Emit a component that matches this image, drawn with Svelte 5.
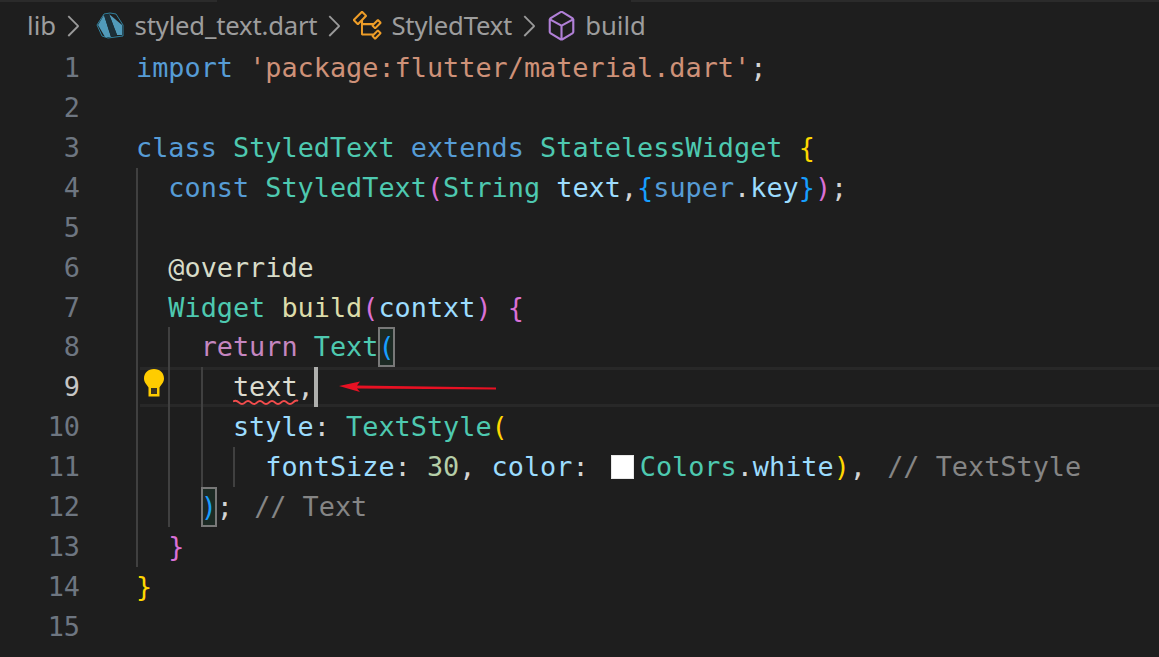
<script>
  const T = '#4ec9b0', K = '#569cd6', V = '#9cdcfe', D = '#d4d4d4', S = '#ce9178', C = '#c586c0', F = '#dcdcaa', N = '#b5cea8', Y = '#ffd700', P = '#da70d6', B = '#179fff', M = '#858585';

  const lines = [
    { n: 1, g: 0, t: [['import', K], [' ', D], ["'package:flutter/material.dart'", S], [';', D]] },
    { n: 2, g: 0, t: [] },
    { n: 3, g: 0, t: [['class', K], [' ', D], ['StyledText', T], [' ', D], ['extends', K], [' ', D], ['StatelessWidget', T], [' ', D], ['{', Y]] },
    { n: 4, g: 1, t: [['const', K], [' ', D], ['StyledText', T], ['(', P], ['String', T], [' ', D], ['text', V], [',', D], ['{', B], ['super', K], ['.', D], ['key', V], ['}', B], [')', P], [';', D]] },
    { n: 5, g: 1, t: [] },
    { n: 6, g: 1, t: [['@override', '#d7dcc8']] },
    { n: 7, g: 1, t: [['Widget', T], [' ', D], ['build', F], ['(', P], ['contxt', V], [')', P], [' ', D], ['{', P]] },
    { n: 8, g: 2, t: [['return', C], [' ', D], ['Text', T], ['(', B, 'box']] },
    { n: 9, g: 3, active: true, t: [['text', '#dcdcd0'], [',', D]] },
    { n: 10, g: 3, t: [['style', V], [':', D], [' ', D], ['TextStyle', T], ['(', Y]] },
    { n: 11, g: 4, t: [['fontSize', V], [':', D], [' ', D], ['30', N], [',', D], [' ', D], ['color', V], [':', D], [' ', D], ['', D, 'swatch'], ['Colors', T], ['.', D], ['white', V], [')', Y], [',', D], [' ', D], ['// TextStyle', M, 'inlay']] },
    { n: 12, g: 2, t: [[')', B, 'box'], [';', D], [' ', D], ['// Text', M, 'inlay']] },
    { n: 13, g: 1, t: [['}', P]] },
    { n: 14, g: 0, t: [['}', Y]] },
    { n: 15, g: 0, t: [] }
  ];
</script>

<main class="editor">
  <div class="topline">
    <span class="seg lit left"></span>
    <span class="seg gap"></span>
    <span class="seg lit"></span>
  </div>

  <nav class="crumbs">
    <span class="lib">lib</span>
    {#snippet chev()}
      <svg class="chev" viewBox="4 0 8 16" aria-hidden="true"><path fill="#9a9a9a" d="M10.072 8.024L5.715 3.667l.618-.62L11 7.716v.618L6.333 13l-.618-.619 4.357-4.357z"/></svg>
    {/snippet}
    {@render chev()}
    <svg class="dart" viewBox="0 0 28 28" aria-hidden="true">
      <path d="M8 2 14 1 20 2 27 13V24L12 26 6 24 1 13Z" fill="#1e1e1e" stroke="#2f7f9c" stroke-width="1"/>
      <path d="M2 13 8 3 15 25H9Z" fill="#519aba"/>
      <path d="M13 2 26 13V23L21 23Z" fill="#519aba"/>
      <path d="M8 3 13 2 21 23 15 25Z" fill="#1c2f38"/>
    </svg>
    <span class="file">styled_text.dart</span>
    {@render chev()}
    <svg class="cls" viewBox="1 1 14 14" aria-hidden="true"><path fill="#ee9d28" d="M11.34 9.71h.71l2.67-2.67v-.71L13.38 5h-.7l-1.82 1.81h-5V5.56l1.86-1.85V3l-2-2H5L1 5v.71l2 2h.71l1.14-1.15v5.79l.5.5H10v.52l1.33 1.34h.71l2.67-2.67v-.71L13.37 10h-.7l-1.86 1.85h-5v-4H10v.48l1.34 1.38zm1.69-3.65l.63.63-2 2-.63-.63 2-2zm0 5l.63.63-2 2-.63-.63 2-2zM3.35 6.65l-1.29-1.3 3.29-3.29 1.3 1.29-3.3 3.3z"/></svg>
    <span class="sym">StyledText</span>
    {@render chev()}
    <svg class="cube" viewBox="2 1 12 14" aria-hidden="true"><path fill="#b180d7" d="M13.51 4l-5-3h-1l-5 3-.49.86v6l.49.86 5 3h1l5-3 .49-.86v-6L13.51 4zm-6 9.56l-4.5-2.7V5.7l4.5 2.45v5.41zM3.27 4.7l4.74-2.84 4.74 2.84-4.74 2.59L3.27 4.7zM13 10.86l-4.5 2.7V8.15L13 5.7v5.16z"/></svg>
    <span class="build">build</span>
  </nav>

  <div class="code">
    {#each lines as line (line.n)}
      <div class="line" class:active={line.active}>
        <span class="num">{line.n}</span>
        {#each Array(line.g) as _}
          <span class="guide"></span>
        {/each}
        <span class="src">{#each line.t as tok}<span class={tok[2]} style:color={tok[1]}>{tok[0]}</span>{/each}</span>
        {#if line.active}
          <svg class="bulb" viewBox="0 0 22 30" aria-hidden="true">
            <path d="M11 1C5 1 1 5 1 10.500C1 14.500 4 17 5.500 19.500V28.500H16.500V19.500C18 17 21 14.500 21 10.500C21 5 17 1 11 1Z" fill="#ffcc00"/>
            <rect x="8" y="20" width="6" height="6" fill="#3a3320"/>
          </svg>
          <svg class="squiggle" viewBox="0 0 66 7" aria-hidden="true">
            <path d="M0 2.500Q3 0.500 6 3.500T12 3.500T18 3.500T24 3.500T30 3.500T36 3.500T42 3.500T48 3.500T54 3.500T60 3.500T65 2" fill="none" stroke="#f14c4c" stroke-width="1.800"/>
          </svg>
          <span class="cursor"></span>
          <svg class="arrow" viewBox="0 0 158 12" aria-hidden="true">
            <path d="M0 5 21 0.500 18 4.500 157 6.500V8.500L18 7.500 21 11Z" fill="#e81123"/>
          </svg>
        {/if}
      </div>
    {/each}
  </div>
</main>

<style>
  :global(body) {
    margin: 0;
    background: #1e1e1e;
  }

  .editor {
    position: relative;
    width: 1159px;
    height: 657px;
    overflow: hidden;
    background: #1e1e1e;
  }

  .topline {
    display: flex;
    height: 2px;
  }
  .seg.gap { flex: 0 0 414px; }
  .seg.lit { flex: 1; background: #2b2b2b; }
  .seg.lit.left { flex: 0 0 217px; }

  .crumbs {
    display: flex;
    align-items: center;
    height: 46px;
    padding-left: 27px;
    padding-top: 1px;
    box-sizing: border-box;
    font-family: "Noto Sans", sans-serif;
    font-size: 25.700px;
    color: #9d9d9d;
    white-space: nowrap;
  }
  .chev { width: 17px; height: 34px; flex: none; }
  .lib { margin-right: 8px; }
  .dart { width: 28px; height: 28px; flex: none; margin: 0 10.500px 0 15px; }
  .file { letter-spacing: -0.200px; margin-right: 7.400px; }
  .cls { width: 31px; height: 29px; flex: none; margin: 0 8px 0 10.600px; }
  .sym { letter-spacing: -0.200px; margin-right: 7.400px; }
  .cube { width: 27px; height: 30px; flex: none; margin: 0 10px 0 11.600px; }

  .code {
    font-family: "DejaVu Sans Mono", monospace;
    font-size: 26.850px;
    line-height: 39.930px;
    white-space: pre;
    color: #d4d4d4;
  }
  .line {
    position: relative;
    display: flex;
    height: 39.930px;
  }
  .line.active::before {
    content: "";
    position: absolute;
    inset: 0 0 0 140px;
    box-sizing: border-box;
    border-top: 3px solid #282828;
    border-bottom: 3px solid #282828;
  }
  .num {
    flex: 0 0 80px;
    margin-right: 56px;
    text-align: right;
    color: #6e7681;
    position: relative;
  }
  .active .num { color: #c6c6c6; }
  .guide {
    flex: 0 0 32.320px;
    box-sizing: border-box;
    border-left: 2px solid #404040;
    position: relative;
  }
  .src { position: relative; }
  .box {
    display: inline-block;
    height: 39.930px;
    vertical-align: top;
    outline: 2px solid #787878;
    outline-offset: -2px;
    background: #1c2a24;
  }
  .swatch {
    display: inline-block;
    width: 23px;
    height: 24px;
    margin: 0 6px 0 6px;
    vertical-align: -3px;
    box-sizing: border-box;
    background: #fff;
    border: 1px solid #e8e8e8;
  }
  .inlay { margin-left: 5px; }
  .bulb {
    position: absolute;
    left: 143px;
    top: 1px;
    width: 22px;
    height: 30px;
  }
  .squiggle {
    position: absolute;
    left: 233px;
    top: 32px;
    width: 66px;
    height: 7px;
  }
  .cursor {
    position: absolute;
    left: 314px;
    top: 0;
    width: 4px;
    height: 40px;
    background: #aeafad;
  }
  .arrow {
    position: absolute;
    left: 339px;
    top: 14px;
    width: 158px;
    height: 12px;
  }
</style>
